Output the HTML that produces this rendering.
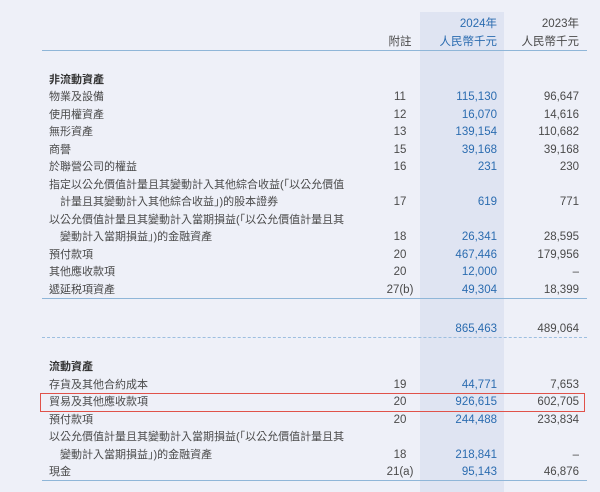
<!DOCTYPE html>
<html><head><meta charset="utf-8"><style>
body{margin:0;width:600px;height:492px;background:#eef0f8;position:relative;overflow:hidden;font-family:"Liberation Sans","Noto Sans CJK TC",sans-serif;font-size:11px;color:#4a4a4a}
.shade{position:absolute;left:420px;top:12px;width:84px;height:480px;background:#dfe4f2}
.r{position:absolute;left:0;width:600px;height:18px;line-height:18px}
.r span{position:absolute;white-space:nowrap}
.l{left:49px}.i{left:60px}
.n{left:360px;width:80px;text-align:center;font-size:11.5px}
.a{right:103px;color:#2b6cb0;font-size:11.5px}
.b{right:21px;font-size:11.5px}
.h{font-weight:bold;color:#333}
.line{position:absolute;left:42px;width:545px;height:0;border-top:1px solid #8fb6d8}
.dot{position:absolute;left:42px;width:545px;border-top:1px dashed #9dbfe0}
.box{position:absolute;left:40px;top:393px;width:543px;height:17px;border:1px solid #e0524a}
</style></head><body>
<div class="shade"></div>
<div class="r" style="top:15px"><span class="a">2024年</span><span class="b">2023年</span></div>
<div class="r" style="top:33px"><span class="n">附註</span><span class="a">人民幣千元</span><span class="b">人民幣千元</span></div>
<div class="line" style="top:50px"></div>
<div class="r h" style="top:71px"><span class="l">非流動資產</span></div>
<div class="r" style="top:88px"><span class="l">物業及設備</span><span class="n">11</span><span class="a">115,130</span><span class="b">96,647</span></div>
<div class="r" style="top:106px"><span class="l">使用權資產</span><span class="n">12</span><span class="a">16,070</span><span class="b">14,616</span></div>
<div class="r" style="top:123px"><span class="l">無形資產</span><span class="n">13</span><span class="a">139,154</span><span class="b">110,682</span></div>
<div class="r" style="top:141px"><span class="l">商譽</span><span class="n">15</span><span class="a">39,168</span><span class="b">39,168</span></div>
<div class="r" style="top:158px"><span class="l">於聯營公司的權益</span><span class="n">16</span><span class="a">231</span><span class="b">230</span></div>
<div class="r" style="top:176px"><span class="l">指定以公允價值計量且其變動計入其他綜合收益(「以公允價值</span></div>
<div class="r" style="top:193px"><span class="i">計量且其變動計入其他綜合收益」)的股本證券</span><span class="n">17</span><span class="a">619</span><span class="b">771</span></div>
<div class="r" style="top:211px"><span class="l">以公允價值計量且其變動計入當期損益(「以公允價值計量且其</span></div>
<div class="r" style="top:228px"><span class="i">變動計入當期損益」)的金融資產</span><span class="n">18</span><span class="a">26,341</span><span class="b">28,595</span></div>
<div class="r" style="top:246px"><span class="l">預付款項</span><span class="n">20</span><span class="a">467,446</span><span class="b">179,956</span></div>
<div class="r" style="top:263px"><span class="l">其他應收款項</span><span class="n">20</span><span class="a">12,000</span><span class="b">–</span></div>
<div class="r" style="top:281px"><span class="l">遞延税項資產</span><span class="n">27(b)</span><span class="a">49,304</span><span class="b">18,399</span></div>
<div class="line" style="top:298px"></div>
<div class="r" style="top:320px"><span class="a">865,463</span><span class="b">489,064</span></div>
<div class="dot" style="top:337px"></div>
<div class="r h" style="top:358px"><span class="l">流動資產</span></div>
<div class="r" style="top:376px"><span class="l">存貨及其他合約成本</span><span class="n">19</span><span class="a">44,771</span><span class="b">7,653</span></div>
<div class="r" style="top:393px"><span class="l">貿易及其他應收款項</span><span class="n">20</span><span class="a">926,615</span><span class="b">602,705</span></div>
<div class="r" style="top:411px"><span class="l">預付款項</span><span class="n">20</span><span class="a">244,488</span><span class="b">233,834</span></div>
<div class="r" style="top:428px"><span class="l">以公允價值計量且其變動計入當期損益(「以公允價值計量且其</span></div>
<div class="r" style="top:446px"><span class="i">變動計入當期損益」)的金融資產</span><span class="n">18</span><span class="a">218,841</span><span class="b">–</span></div>
<div class="r" style="top:463px"><span class="l">現金</span><span class="n">21(a)</span><span class="a">95,143</span><span class="b">46,876</span></div>
<div class="line" style="top:480px"></div>
<div class="box"></div>
</body></html>
